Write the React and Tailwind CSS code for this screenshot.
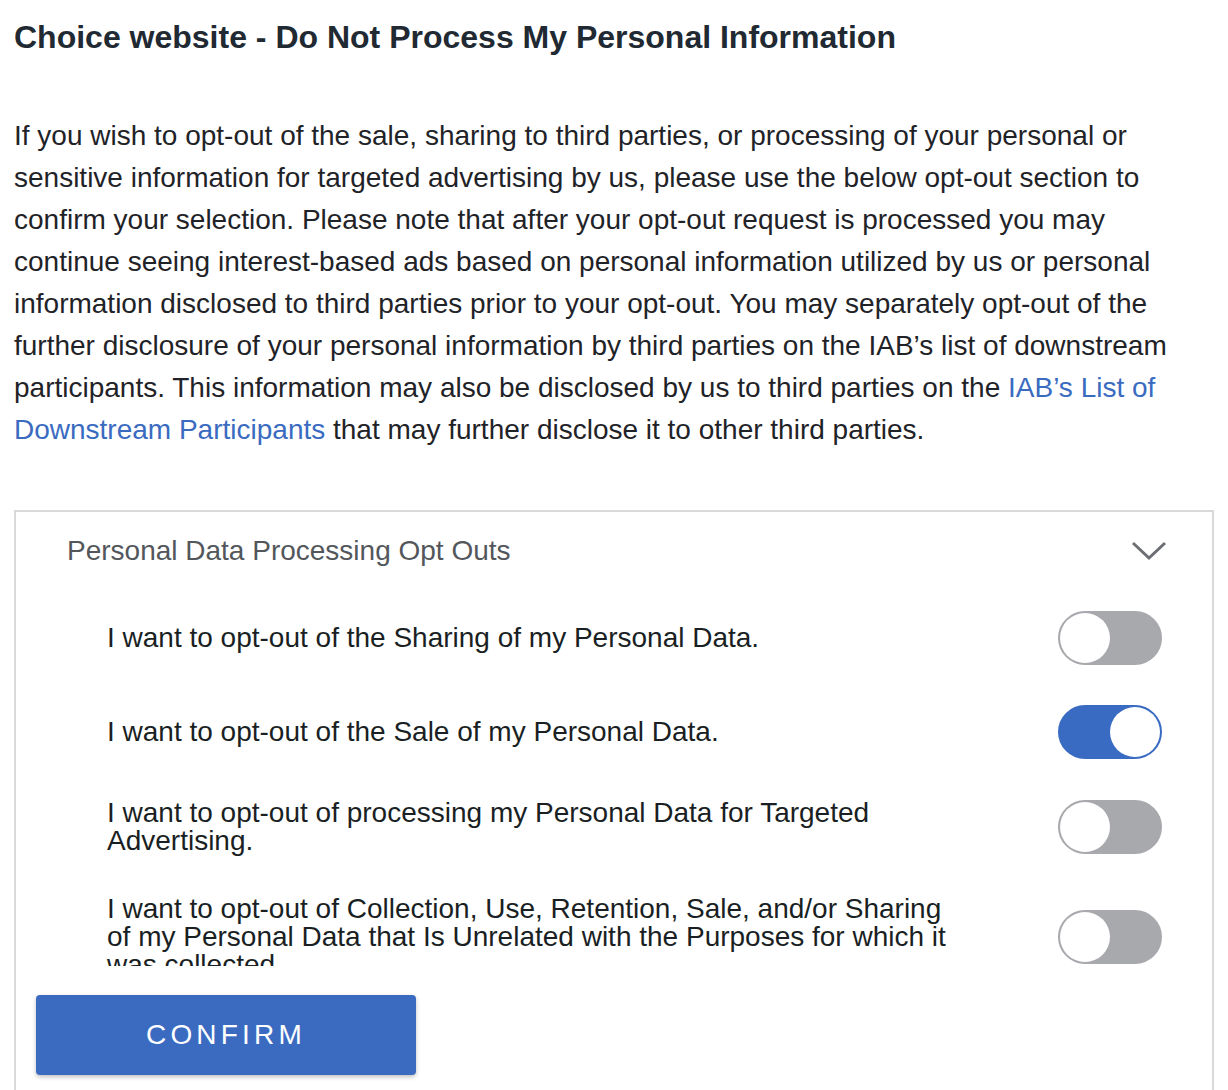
import React, { useState } from "react";

const items = [
  { id: 1, label: "I want to opt-out of the Sharing of my Personal Data.", on: false },
  { id: 2, label: "I want to opt-out of the Sale of my Personal Data.", on: true },
  { id: 3, label: "I want to opt-out of processing my Personal Data for Targeted Advertising.", on: false },
  {
    id: 4,
    label:
      "I want to opt-out of Collection, Use, Retention, Sale, and/or Sharing of my Personal Data that Is Unrelated with the Purposes for which it was collected.",
    on: false,
  },
];

function Toggle({ checked, onChange }) {
  return (
    <button
      onClick={onChange}
      className={
        "relative w-[104px] h-[54px] shrink-0 rounded-full border-2 " +
        (checked ? "bg-[#3a6bc2] border-[#3a6bc2]" : "bg-[#a8a9ad] border-[#a8a9ad]")
      }
    >
      <span
        className={
          "absolute top-0 w-[50px] h-[50px] rounded-full bg-white " +
          (checked ? "right-0" : "left-0")
        }
      />
    </button>
  );
}

export default function App() {
  const [state, setState] = useState(items.map((i) => i.on));

  const flip = (idx) => setState((s) => s.map((v, i) => (i === idx ? !v : v)));

  return (
    <div className="h-[1090px] overflow-hidden bg-white pl-[14px] pr-[14px] font-['Liberation_Sans',Arial,sans-serif]">
      <h1 className="pt-[19px] text-[32px] leading-[36px] font-bold text-[#212932]">
        Choice website - Do Not Process My Personal Information
      </h1>
      <p className="mt-[60px] text-[28px] leading-[42px] text-[#1f2328]">
        If you wish to opt-out of the sale, sharing to third parties, or processing of your personal or
        sensitive information for targeted advertising by us, please use the below opt-out section to
        confirm your selection. Please note that after your opt-out request is processed you may continue
        seeing interest-based ads based on personal information utilized by us or personal information
        disclosed to third parties prior to your opt-out. You may separately opt-out of the further
        disclosure of your personal information by third parties on the IAB’s list of downstream
        participants. This information may also be disclosed by us to third parties on the{" "}
        <a href="#" className="text-[#3a6bc1]">
          IAB’s List of Downstream Participants
        </a>{" "}
        that may further disclose it to other third parties.
      </p>

      <div className="mt-[59px] border-2 border-b-0 border-[#d9d9d9] h-[600px]">
        <div className="h-[78px] flex items-center justify-between pl-[51px] pr-[45px]">
          <span className="text-[28px] leading-[30px] text-[#53575c]">
            Personal Data Processing Opt Outs
          </span>
          <svg width="36" height="20" viewBox="0 0 36 20" fill="none">
            <path d="M2 2 L18 17 L34 2" stroke="#6b6e72" strokeWidth="3" />
          </svg>
        </div>

        <div className="h-[376px] overflow-hidden pt-[21px] pl-[91px] pr-[50px] flex flex-col gap-[40px]">
          {items.map((item, idx) => (
            <div key={item.id} className="flex items-center justify-between gap-6">
              <span className="max-w-[850px] text-[28px] leading-[28px] text-[#1a1f24]">
                {item.label}
              </span>
              <Toggle checked={state[idx]} onChange={() => flip(idx)} />
            </div>
          ))}
        </div>

        <button className="mt-[29px] ml-[20px] w-[380px] h-[80px] rounded-[4px] bg-[#3a6bc1] text-white text-[28px] tracking-[4.2px] shadow-[0_2px_4px_rgba(0,0,0,0.25)]">
          CONFIRM
        </button>
      </div>
    </div>
  );
}
